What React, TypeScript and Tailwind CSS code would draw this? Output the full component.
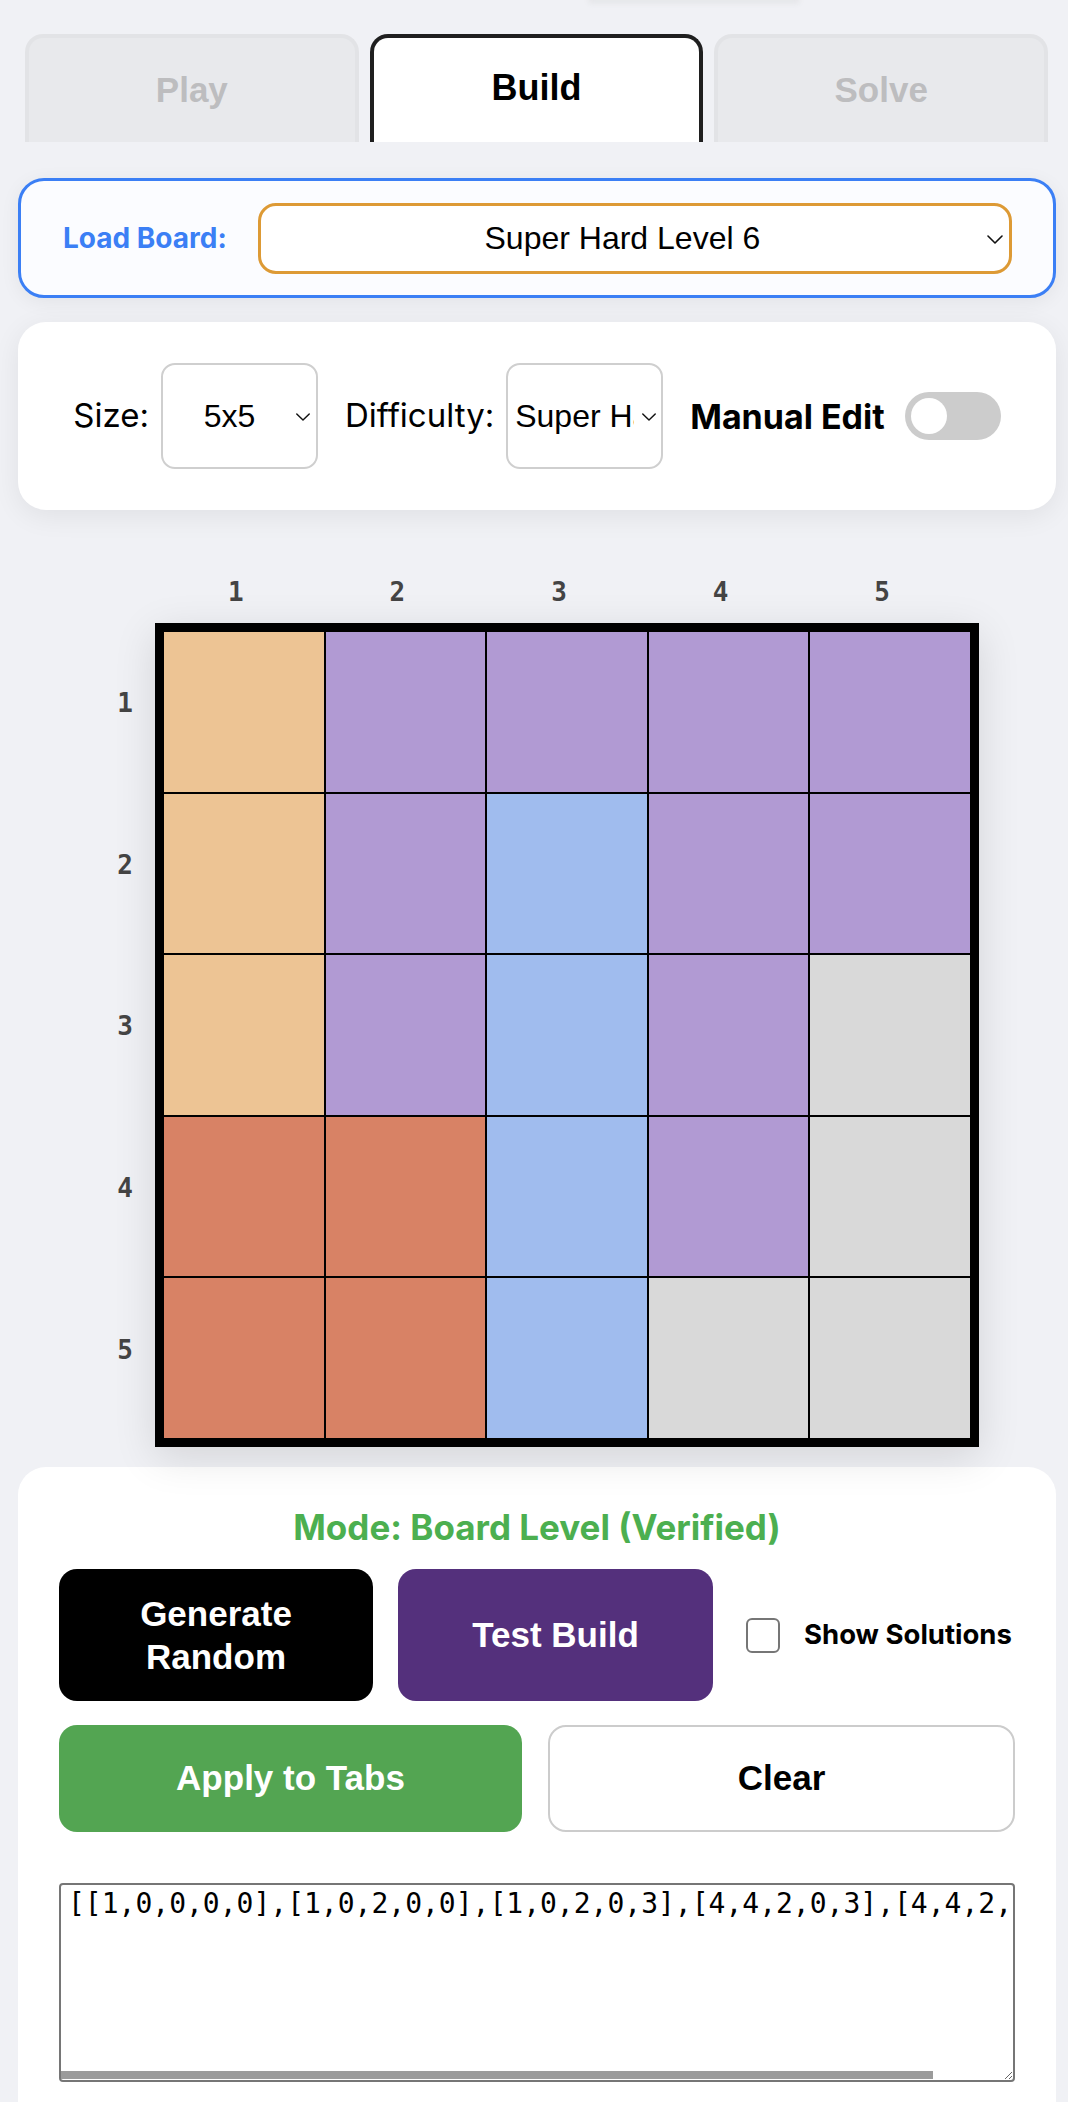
import React from 'react';

const cellColor: Record<number, string> = {
  0: 'bg-[#b19ad3]',
  1: 'bg-[#edc494]',
  2: 'bg-[#a0bcee]',
  3: 'bg-[#d9d9d9]',
  4: 'bg-[#d88265]',
};

const board = [
  [1, 0, 0, 0, 0],
  [1, 0, 2, 0, 0],
  [1, 0, 2, 0, 3],
  [4, 4, 2, 0, 3],
  [4, 4, 2, 3, 3],
];

const sans = "font-['Inter',sans-serif]";
const arial = "font-['Liberation_Sans',Arial,sans-serif]";
const mono = "font-['DejaVu_Sans_Mono',monospace]";

const Chevron: React.FC<{ className?: string }> = ({ className }) => (
  <svg viewBox="0 0 16 9" className={className} fill="none" stroke="#111" strokeWidth="1.6" strokeLinecap="round" strokeLinejoin="round">
    <path d="M1 1l7 7 7-7" />
  </svg>
);

export default function App() {
  return (
    <div className="min-h-[2102px] w-full overflow-hidden bg-[#f0f1f5]">
      {/* shadow of whatever sits above the fold */}
      <div className="ml-[588px] -mt-[4px] h-[8px] w-[212px] rounded-full bg-[#e6e7ea] blur-[2px]" />

      {/* Tabs */}
      <div className="mt-[30px] flex h-[108px] gap-[11px] pl-[25px] pr-[20px]">
        <button className={`${arial} flex-1 rounded-t-[18px] border-[4px] border-b-0 border-[#e2e3e6] bg-[#e8e9ec] pt-[26px] text-[35px] font-bold text-[#bdbdbf] flex justify-center items-start`}>Play</button>
        <button className={`${arial} flex-1 rounded-t-[18px] border-[4px] border-b-0 border-[#1f1f1f] bg-white pt-[23px] text-[36px] font-bold text-black flex justify-center items-start`}>Build</button>
        <button className={`${arial} flex-1 rounded-t-[18px] border-[4px] border-b-0 border-[#e2e3e6] bg-[#e8e9ec] pt-[26px] text-[35px] font-bold text-[#bdbdbf] flex justify-center items-start`}>Solve</button>
      </div>

      <div className="pl-[18px] pr-[12px]">
        {/* Load board */}
        <div className="mt-[36px] flex h-[120px] items-center gap-[31px] rounded-[26px] border-[3px] border-[#3b7ff5] bg-[#fbfcff] pl-[42px] pr-[41px] shadow-[0_4px_20px_rgba(0,0,0,0.06)]">
          <span className={`${sans} text-[28px] font-bold text-[#3b7ff5]`}>Load Board:</span>
          <div className="relative flex-1">
            <select defaultValue="sh6" className={`${arial} h-[71px] w-full appearance-none rounded-[18px] border-[3px] border-[#dd9a35] bg-white pl-[10px] pr-[35px] text-center text-[32px] text-black outline-none`}>
              <option value="sh6">Super Hard Level 6</option>
            </select>
            <Chevron className="pointer-events-none absolute right-[9px] top-[32px] h-[9px] w-[16px]" />
          </div>
        </div>

        {/* Size / difficulty */}
        <div className="mt-[24px] flex items-center justify-center gap-[27px] rounded-[28px] bg-white py-[41px] shadow-[0_6px_28px_rgba(0,0,0,0.07)]">
          <div className="flex items-center gap-[12px]">
            <span className={`${sans} text-[33px] text-black`}>Size:</span>
            <div className="relative">
              <select defaultValue="5" className={`${arial} h-[106px] w-[157px] appearance-none rounded-[14px] border-2 border-[#cfcfcf] bg-white pl-[10px] pr-[30px] text-center text-[32px] text-black outline-none`}>
                <option value="5">5x5</option>
              </select>
              <Chevron className="pointer-events-none absolute right-[7px] top-[50px] h-[8px] w-[16px]" />
            </div>
          </div>
          <div className="flex items-center gap-[12px]">
            <span className={`${sans} text-[33px] text-black`}>Difficulty:</span>
            <div className="relative">
              <select defaultValue="sh" className={`${arial} h-[106px] w-[157px] appearance-none rounded-[14px] border-2 border-[#cfcfcf] bg-white pl-[7px] pr-[27px] text-left text-[32px] text-black outline-none`}>
                <option value="sh">Super Hard</option>
              </select>
              <Chevron className="pointer-events-none absolute right-[6px] top-[50px] h-[8px] w-[16px]" />
            </div>
          </div>
          <div className="flex items-center gap-[20px]">
            <span className={`${sans} text-[34px] font-bold text-black`}>Manual Edit</span>
            <div className="flex h-[48px] w-[96px] items-center rounded-full bg-[#cccccc] px-[6px]">
              <div className="h-[36px] w-[36px] rounded-full bg-white" />
            </div>
          </div>
        </div>

        {/* Board */}
        <div className="mt-[67px] grid grid-cols-[30px_824px] grid-rows-[30px_824px] gap-x-[15px] gap-y-[16px] pl-[92px]">
          <div />
          <div className="flex w-[808px]">
            {[1, 2, 3, 4, 5].map(n => (
              <div key={n} className={`${mono} flex-1 text-center text-[26px] font-bold leading-[30px] text-[#444]`}>{n}</div>
            ))}
          </div>
          <div className="flex h-[808px] flex-col">
            {[1, 2, 3, 4, 5].map(n => (
              <div key={n} className={`${mono} flex flex-1 items-center justify-center text-[26px] font-bold text-[#444]`}>{n}</div>
            ))}
          </div>
          <div className="grid h-[824px] w-[824px] grid-cols-5 grid-rows-5 border-[8px] border-black shadow-[0_10px_40px_rgba(0,0,0,0.12)]">
            {board.flat().map((v, i) => (
              <div key={i} className={`border border-black ${cellColor[v]}`} />
            ))}
          </div>
        </div>

        {/* Controls */}
        <div className="mt-[20px] rounded-t-[28px] bg-white px-[41px] pb-[60px] pt-[39px]">
          <p className={`${sans} text-center text-[35px] font-bold leading-[42px] text-[#4caf50]`}>Mode: Board Level (Verified)</p>

          <div className="mt-[21px] flex items-center">
            <button className={`${arial} h-[132px] w-[314px] shrink-0 rounded-[18px] bg-black text-[35px] font-bold leading-[43px] text-white`}>Generate<br />Random</button>
            <button className={`${arial} ml-[25px] h-[132px] w-[315px] shrink-0 rounded-[18px] bg-[#54307c] text-[35px] font-bold text-white`}>Test Build</button>
            <label className="ml-[33px] flex shrink-0 items-center gap-[24px] whitespace-nowrap">
              <span className="block h-[35px] w-[34px] rounded-[6px] border-2 border-[#767676] bg-white" />
              <span className={`${sans} text-[27.5px] font-bold text-black`}>Show Solutions</span>
            </label>
          </div>

          <div className="mt-[24px] flex gap-[26px]">
            <button className={`${arial} h-[107px] flex-1 rounded-[18px] bg-[#53a552] text-[35px] font-bold text-white`}>Apply to Tabs</button>
            <button className={`${arial} h-[107px] flex-1 rounded-[18px] border-2 border-[#cccccc] bg-white text-[35px] font-bold text-black`}>Clear</button>
          </div>

          <div className="relative mt-[51px]">
            <textarea
              wrap="off"
              readOnly
              defaultValue="[[1,0,0,0,0],[1,0,2,0,0],[1,0,2,0,3],[4,4,2,0,3],[4,4,2,3,3]]"
              className={`${mono} block h-[199px] w-full resize-y overflow-hidden whitespace-pre rounded-[4px] border-2 border-[#767676] bg-white px-[7px] py-[2px] text-[28px] leading-[34px] text-black outline-none`}
            />
            {/* horizontal scroll thumb */}
            <div className="pointer-events-none absolute bottom-[3px] left-[2px] h-[8px] w-[872px] bg-[#9b9b9b]" />
          </div>
        </div>
      </div>
    </div>
  );
}
